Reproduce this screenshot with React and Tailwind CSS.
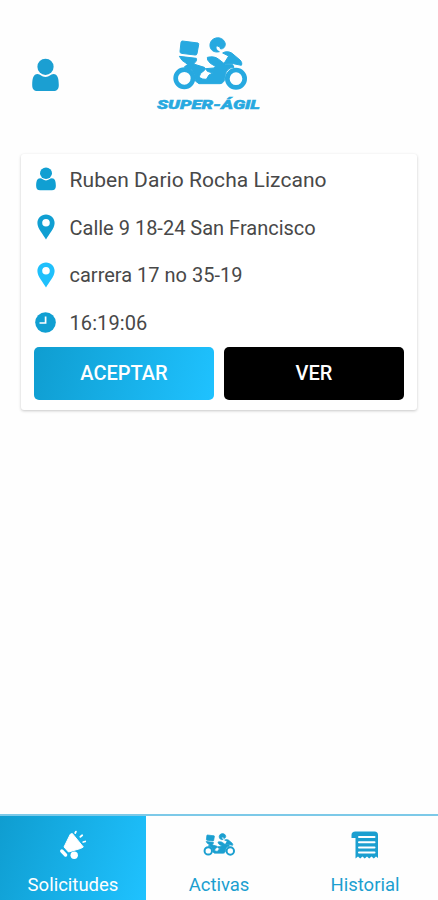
import { useState } from "react";

function Moto({ className }) {
  return (
    <svg viewBox="81 21 225 165" className={className} fill="currentColor" stroke="currentColor" strokeLinejoin="round">
      <path d="M112 33 L159 39 Q162 40 161 44 L156 71 Q155 76 150 75 L109 70 Q104 69 105 64 L108 37 Q109 33 112 33 Z" />
      <circle cx="118" cy="145" r="26" fill="none" strokeWidth="14" />
      <circle cx="273" cy="146" r="26" fill="none" strokeWidth="14" />
      <path d="M103 79 L154 85 C157 91 151 97 146 102 L178 112 C183 115 181 119 177 122 L167 130 L162 142 L173 147 L184 148 L192 135 L203 129 L187 124 L182 116 L207 114 L211 109 L196 100 L188 90 L187 82 C200 79 211 80 220 87 L242 104 L263 104 L267 112 C251 113 241 123 240 141 C239 154 234 160 225 161 L162 161 L151 153 L148 133 L140 119 L118 111 L128 103 L111 91 Z" />
      <path d="M233 69 C240 64 252 64 260 69 L285 90 C290 95 292 101 289 106 L265 101 L236 102 L251 78 Z" />
      <path d="M241 43 C238 17 199 17 195 43 C193 61 209 69 223 65 C216 62 211 55 214 48 C220 47 225 51 227 57 C235 57 240 52 241 43 Z" />
    </svg>
  );
}

function UserIcon({ className }) {
  return (
    <svg viewBox="0 0 27 34" className={className} fill="currentColor" preserveAspectRatio="none">
      <circle cx="13.5" cy="8.8" r="8.1" />
      <path d="M5.5 16 C8.5 16 9.5 19 13.5 19 C17.5 19 18.5 16 21.5 16 C25.5 16 26.8 20 26.8 27 C26.8 31 25 33 21.5 33 H5.5 C2 33 .2 31 .2 27 C.2 20 1.5 16 5.5 16 Z" />
    </svg>
  );
}

function PinIcon({ className }) {
  return (
    <svg viewBox="0 0 18 26" className={className} fill="currentColor">
      <path fillRule="evenodd" d="M9 .5 C4 .5 .4 4.3 .4 9 C.4 14.5 6 20 9 25.5 C12 20 17.6 14.5 17.6 9 C17.6 4.3 14 .5 9 .5 Z M9 5 A3.8 3.8 0 1 1 9 12.6 A3.8 3.8 0 1 1 9 5 Z" />
    </svg>
  );
}

function ClockIcon({ className }) {
  return (
    <svg viewBox="0 0 21 21" className={className}>
      <circle cx="10.5" cy="10.5" r="10.3" fill="currentColor" />
      <path d="M10.6 4.5 V11 H4.5" fill="none" stroke="#fff" strokeWidth="1.7" />
    </svg>
  );
}

function MegaphoneIcon({ className }) {
  return (
    <svg viewBox="0 0 28 31" className={className} fill="currentColor">
      <path d="M13.3 3.5 L24.3 17 L21.5 18.5 L9.5 22 L5 17 L11.3 4.2 Z" stroke="currentColor" strokeLinejoin="round" />
      <path d="M2.8 21 L6.6 25" stroke="currentColor" strokeWidth="3.4" strokeLinecap="round" />
      <circle cx="15.2" cy="25.2" r="3.7" />
      <path d="M16.2 3 L16.9 1.6 M21.4 6.8 L23.2 5.3 M24.2 12 L26.2 11.5" stroke="currentColor" strokeWidth="1.8" strokeLinecap="round" />
    </svg>
  );
}

function ReceiptIcon({ className }) {
  return (
    <svg viewBox="0 0 28 28" className={className}>
      <path d="M4.5 .5 H23.5 Q27 .5 27 4 V27 L25 25.5 L22.8 27.5 L20.5 25.5 L18.2 27.5 L16 25.5 L13.7 27.5 L11.5 25.5 L9.2 27.5 L7 25.5 L4.5 27.5 V7 H.5 V4 Q.5 .5 4.5 .5 Z" fill="currentColor" />
      <path d="M8 6 H23.5 M8 11.2 H23.5 M8 16.4 H23.5 M8 21.4 H23.5" stroke="#fff" strokeWidth="2" strokeLinecap="round" />
    </svg>
  );
}

const rows = [
  { icon: <UserIcon className="w-5 h-6 mb-0.5 text-[#109fd2]" />, text: "Ruben Dario Rocha Lizcano", style: "mt-0.5 text-[21px] tracking-[0.06px]" },
  { icon: <PinIcon className="w-[18px] h-[26px] mb-0.5 text-[#109fd2]" />, text: "Calle 9 18-24 San Francisco", style: "text-[20px]" },
  { icon: <PinIcon className="w-[18px] h-[26px] text-[#1fc0fc]" />, text: "carrera 17 no 35-19", style: "text-[20px]" },
  { icon: <ClockIcon className="w-[21px] h-[21px] text-[#109fd2]" />, text: "16:19:06", style: "text-[20px] tracking-[0.1px]" },
];

const tabs = [
  { id: "solicitudes", label: "Solicitudes", icon: <MegaphoneIcon className="w-7 h-[31px]" /> },
  { id: "activas", label: "Activas", icon: <Moto className="w-8 h-6 stroke-[5]" /> },
  { id: "historial", label: "Historial", icon: <ReceiptIcon className="w-7 h-7" /> },
];

export default function App() {
  const [tab, setTab] = useState("solicitudes");

  return (
    <div className="h-screen flex flex-col overflow-hidden bg-[#fefefe] font-['Roboto',sans-serif] text-[#484848]">
      <header className="h-[154px] shrink-0 flex items-start pl-8">
        <button className="mt-[58px]">
          <UserIcon className="w-[27px] h-[34px] text-[#1b9fd2]" />
        </button>
        <div className="ml-[95px] mt-[37px] w-[108px] flex flex-col items-center text-[#27a9e0]">
          <Moto className="w-[75px] h-[55px] ml-[3px] stroke-[3]" />
          <svg viewBox="0 0 108 18" className="w-[108px] h-[18px] overflow-visible">
            <text x="3" y="17" textLength="103" lengthAdjust="spacingAndGlyphs" fill="currentColor" stroke="currentColor" strokeWidth=".5" className="font-['Roboto',sans-serif] font-black italic text-[13px]">
              SUPER-ÁGIL
            </text>
          </svg>
        </div>
      </header>

      <main className="flex-1 px-[21px]">
        <div className="h-[256px] rounded-[3px] bg-white px-[13px] pt-[2px] shadow-[0_1px_3px_rgba(0,0,0,0.22)]">
          {rows.map((row) => (
            <div key={row.text} className="h-[47.7px] flex items-center">
              <div className="w-[23px] flex justify-center">{row.icon}</div>
              <span className={`ml-[12.5px] whitespace-nowrap ${row.style}`}>{row.text}</span>
            </div>
          ))}
          <div className="flex gap-[10px]">
            <button className="flex-1 h-[53px] rounded-[5px] bg-linear-[105deg,#0f9dd0,#1fc2ff] text-white text-[20px] font-medium">ACEPTAR</button>
            <button className="flex-1 h-[53px] rounded-[5px] bg-black text-white text-[20px] font-medium">VER</button>
          </div>
        </div>
      </main>

      <nav className="h-[86px] shrink-0 flex border-t-2 border-[#7cc9e8]">
        {tabs.map((t) => (
          <button
            key={t.id}
            onClick={() => setTab(t.id)}
            className={`flex-1 h-full flex flex-col items-center ${tab === t.id ? "bg-linear-[110deg,#0f9dd0,#1fc2ff] text-white" : "text-[#1b9fd0]"}`}
          >
            <span className="h-[58px] flex items-center">{t.icon}</span>
            <span className="text-[18.5px] leading-[23px]">{t.label}</span>
          </button>
        ))}
      </nav>
    </div>
  );
}
